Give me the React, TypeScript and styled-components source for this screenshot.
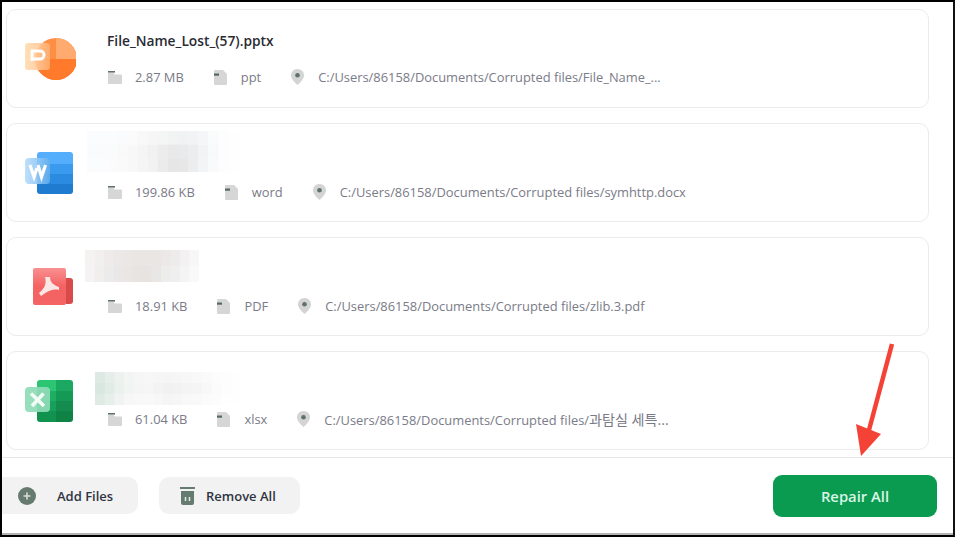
import React from "react";
import styled, { createGlobalStyle } from "styled-components";

const Global = createGlobalStyle`
  html, body { margin: 0; padding: 0; background: #000; }
  * { box-sizing: border-box; }
`;

const Frame = styled.div`
  position: relative;
  width: 955px;
  height: 537px;
  background: #fff;
  border-top: 2px solid #000;
  border-left: 2px solid #000;
  border-right: 2px solid #111;
  border-bottom: 2px solid #000;
  font-family: "Open Sans", "Noto Sans CJK KR", sans-serif;
  overflow: hidden;
  display: flex;
  flex-direction: column;
`;

const List = styled.div`
  display: flex;
  flex-direction: column;
  gap: 15px;
  padding: 7px 0 0 4px;
  width: 927px;
`;

const Card = styled.div`
  height: 99px;
  border: 1px solid #ebebeb;
  border-radius: 10px;
  background: #fff;
  display: flex;
  align-items: center;
`;

const IconCell = styled.div`
  width: 100px;
  flex: none;
  padding-left: 17px;
  display: flex;
  align-items: center;
`;

const Body = styled.div`
  flex: 1;
  height: 100%;
  min-width: 0;
  display: flex;
  flex-direction: column;
`;

const TitleSlot = styled.div<{ $height: number }>`
  height: ${(p) => p.$height}px;
  flex: none;
  display: flex;
  align-items: flex-start;
`;

const Title = styled.div`
  margin-top: 22px;
  font-size: 13.75px;
  line-height: 18px;
  font-weight: 600;
  color: #2b2b33;
`;

const Mosaic = styled.svg<{ $shift: number; $top: number }>`
  display: block;
  margin-left: ${(p) => p.$shift}px;
  margin-top: ${(p) => p.$top}px;
`;

const Meta = styled.div`
  display: flex;
  align-items: center;
  gap: 30px;
  height: 18px;
  padding-left: 1px;
  font-size: 12.9px;
  color: #7a7b88;
`;

const MetaItem = styled.div<{ $gap: number }>`
  display: flex;
  align-items: center;
  gap: ${(p) => p.$gap}px;
  white-space: nowrap;
`;

const KoreanTail = styled.span`
  font-size: 14.1px;
`;

const Footer = styled.div`
  margin-top: 7px;
  margin-left: -2px;
  height: 76px;
  border-top: 1px solid #e6e6e6;
  padding: 17px 16px 0 0;
  display: flex;
  align-items: flex-start;
  gap: 21px;
`;

const SoftButton = styled.div<{ $width: number; $gap: number; $pad: number; $flat?: boolean }>`
  width: ${(p) => p.$width}px;
  height: 37px;
  margin-top: 2px;
  background: #f2f2f2;
  border-radius: ${(p) => (p.$flat ? "0 10px 10px 0" : "10px")};
  padding-left: ${(p) => p.$pad}px;
  display: flex;
  align-items: center;
  gap: ${(p) => p.$gap}px;
  font-size: 13px;
  font-weight: 600;
  color: #2f3442;
`;

const RepairButton = styled.div`
  margin-left: auto;
  width: 164px;
  height: 42px;
  border-radius: 9px;
  background: #0a9b50;
  color: #d9f5e6;
  font-size: 14.8px;
  font-weight: 600;
  display: flex;
  align-items: center;
  justify-content: center;
`;

const BottomEdge = styled.div`
  position: absolute;
  left: 0;
  right: 0;
  bottom: 0;
  height: 2px;
  background: #b4b4b4;
`;

const Arrow = styled.svg`
  position: absolute;
  left: 848px;
  top: 340px;
`;

const Folder = () => (
  <svg width="14" height="13" viewBox="0 0 14 13">
    <path d="M0 2h5.5l1.5 1.5H13a1 1 0 0 1 1 1V12a1 1 0 0 1-1 1H1a1 1 0 0 1-1-1z" fill="#d6d6d6" />
    <rect x="0" y="0" width="7" height="1.6" fill="#5f7268" />
  </svg>
);

const FileGlyph = () => (
  <svg width="13" height="15" viewBox="0 0 13 15">
    <path d="M1 0h8l4 4v10a1 1 0 0 1-1 1H1a1 1 0 0 1-1-1V1a1 1 0 0 1 1-1z" fill="#d6d6d6" />
    <rect x="0" y="3.5" width="5" height="2.2" fill="#56695f" />
  </svg>
);

const Pin = () => (
  <svg width="13" height="16" viewBox="0 0 13 16">
    <path d="M6.5 0C2.9 0 0 2.8 0 6.3 0 10 3.6 13.6 6.5 16 9.4 13.6 13 10 13 6.3 13 2.8 10.1 0 6.5 0z" fill="#d4d4d4" />
    <circle cx="6.5" cy="6.3" r="2.3" fill="#5f7268" />
  </svg>
);

const PlusCircle = () => (
  <svg width="18" height="18" viewBox="0 0 18 18">
    <circle cx="9" cy="9" r="9" fill="#667b6f" />
    <path d="M9 5.5v7M5.5 9h7" stroke="#d9dedb" strokeWidth="1.6" />
  </svg>
);

const Trash = () => (
  <svg width="15" height="18" viewBox="0 0 15 18">
    <rect x="0" y="0" width="15" height="2" fill="#667b6f" />
    <path d="M1 4h13v12a2 2 0 0 1-2 2H3a2 2 0 0 1-2-2z" fill="#667b6f" />
    <path d="M5.5 10v4M9.5 10v4" stroke="#e4e8e5" strokeWidth="1.5" />
  </svg>
);

const PptIcon = () => (
  <svg width="52" height="46" viewBox="0 0 52 46">
    <defs>
      <linearGradient id="pg" x1="0" y1="0" x2="1" y2="0">
        <stop offset="0" stopColor="#ffe0b8" />
        <stop offset="1" stopColor="#ffb57a" stopOpacity="0.75" />
      </linearGradient>
    </defs>
    <circle cx="32" cy="23" r="21" fill="#ff8e45" />
    <path d="M32 2a21 21 0 0 1 21 21H32z" fill="#ffab6f" />
    <path d="M11 23h42a21 21 0 0 1-42 0z" fill="#ff7a2b" />
    <rect x="1" y="7" width="25" height="27" rx="3" fill="url(#pg)" />
    <path d="M8 25V15H16a4 4 0 0 1 0 8H8" fill="none" stroke="#fff" strokeWidth="3" />
  </svg>
);

const WordIcon = () => (
  <svg width="52" height="46" viewBox="0 0 52 46">
    <defs>
      <linearGradient id="wg" x1="0" y1="0" x2="1" y2="0">
        <stop offset="0" stopColor="#bfe0fa" />
        <stop offset="1" stopColor="#66b0ee" stopOpacity="0.8" />
      </linearGradient>
    </defs>
    <path d="M16 2h30a3 3 0 0 1 3 3v9H13V5a3 3 0 0 1 3-3z" fill="#55aefc" />
    <rect x="13" y="14" width="36" height="10" fill="#3a9bee" />
    <rect x="13" y="24" width="36" height="10" fill="#2b8be0" />
    <path d="M13 34h36v7a3 3 0 0 1-3 3H16a3 3 0 0 1-3-3z" fill="#1e7bcf" />
    <rect x="1" y="8" width="25" height="26" rx="4" fill="url(#wg)" />
    <path d="M6 15l4 12 3-9M14 15l3.5 12 4-12" fill="none" stroke="#fff" strokeWidth="3.2" />
  </svg>
);

const PdfIcon = () => (
  <svg width="52" height="46" viewBox="0 0 52 46">
    <defs>
      <linearGradient id="rg" x1="0" y1="0" x2="0" y2="1">
        <stop offset="0" stopColor="#f99090" />
        <stop offset="0.5" stopColor="#f46262" />
        <stop offset="1" stopColor="#f46464" />
      </linearGradient>
    </defs>
    <path d="M42 14h4a3 3 0 0 1 3 3v20a3 3 0 0 1-3 3h-4z" fill="#d94a4a" />
    <rect x="9" y="4" width="33" height="37" rx="2" fill="url(#rg)" />
    <path d="M21 13L26 13C26 18 29 21 35 23L35 26C30 25 27 26 23 28L17 32 15 29C20 25 23 20 21 13z" fill="#fbe6e6" />
  </svg>
);

const ExcelIcon = () => (
  <svg width="52" height="46" viewBox="0 0 52 46">
    <path d="M16 2h16v11H13V5a3 3 0 0 1 3-3z" fill="#2cc574" />
    <path d="M32 2h14a3 3 0 0 1 3 3v8H32z" fill="#1ba860" />
    <rect x="13" y="13" width="19" height="10" fill="#1eae63" />
    <rect x="32" y="13" width="17" height="10" fill="#159a55" />
    <rect x="13" y="23" width="19" height="10" fill="#16a059" />
    <rect x="32" y="23" width="17" height="10" fill="#138c4e" />
    <path d="M13 33h19v11H16a3 3 0 0 1-3-3z" fill="#11934f" />
    <path d="M32 33h17v8a3 3 0 0 1-3 3H32z" fill="#0e8345" />
    <rect x="1" y="9" width="25" height="25" rx="4" fill="#8fdcb7" fillOpacity="0.93" />
    <path d="M7 15.5L20 28M19.5 15.5L8 28" stroke="#f3fbf7" strokeWidth="3.6" />
  </svg>
);

type Cells = { w: number; h: number; rows: string[][] };

const MosaicBlock = ({ cells, shift, top }: { cells: Cells; shift: number; top: number }) => (
  <Mosaic
    $shift={shift}
    $top={top}
    width={cells.rows[0].length * cells.w}
    height={cells.rows.length * cells.h}
  >
    {cells.rows.map((r, y) =>
      r.map((c, x) => <rect key={`${x}-${y}`} x={x * cells.w} y={y * cells.h} width={cells.w + 0.5} height={cells.h + 0.5} fill={c} />)
    )}
  </Mosaic>
);

const blue: Cells = {
  w: 10.1,
  h: 13.7,
  rows: [
    ["#fbfcfe", "#fbfcfe", "#fbfcfd", "#fafbfc", "#fbfbfc", "#f8f8f8", "#f6f6f6", "#f4f5f5", "#f2f3f3", "#f1f2f3", "#f2f3f5", "#f5f6f8", "#fafbfc", "#fdfdfe", "#fefefe"],
    ["#fafbfd", "#fafbfd", "#fafbfc", "#f9f9fa", "#f8f8f8", "#f5f5f5", "#f1f1f1", "#ececec", "#e9e9ea", "#e8eaeb", "#ebedef", "#f1f3f5", "#f8f9fb", "#fdfdfe", "#fefefe"],
    ["#fbfcfd", "#fbfcfd", "#fbfbfc", "#fafafa", "#f8f8f8", "#f5f5f5", "#f2f2f2", "#ebebeb", "#e6e6e6", "#e7e7e8", "#ebedef", "#f2f4f6", "#f9fafb", "#fdfdfe", "#fefefe"],
  ],
};

const rose: Cells = {
  w: 9.5,
  h: 16,
  rows: [
    ["#f5f2f2", "#f2efef", "#eeebea", "#ebe8e7", "#ebe7e5", "#e9e6e3", "#e9e6e3", "#e9e6e4", "#ebe8e7", "#eeebeb", "#f3f1f1", "#f8f7f7"],
    ["#f5f3f3", "#f1eeee", "#ecebeb", "#e9e7e7", "#ebe6e4", "#e8e4e2", "#e6e3e0", "#e9e7e5", "#ededec", "#f0efef", "#f5f4f4", "#f9f9f9"],
  ],
};

const green: Cells = {
  w: 9.7,
  h: 11,
  rows: [
    ["#dde9e3", "#e5eeea", "#edf2ef", "#f3f5f4", "#f5f6f5", "#f7f7f7", "#f6f6f6", "#f5f5f5", "#f6f6f6", "#f7f7f7", "#f8f8f8", "#fafafa", "#fcfcfc", "#fdfdfd", "#fefefe"],
    ["#d8e7df", "#e1ece6", "#ebf1ed", "#f1f4f2", "#f4f5f4", "#f6f6f6", "#f3f3f3", "#f1f1f1", "#f2f2f2", "#f4f4f4", "#f5f5f5", "#f8f8f8", "#fbfbfb", "#fdfdfd", "#fefefe"],
    ["#dfeae5", "#e7efeb", "#f0f3f1", "#f6f7f6", "#f8f8f8", "#f9f9f9", "#f7f7f7", "#f5f5f5", "#f6f6f6", "#f8f8f8", "#f9f9f9", "#fbfbfb", "#fcfcfc", "#fefefe", "#fefefe"],
  ],
};

const Row = ({ size, kind, path }: { size: string; kind: string; path: React.ReactNode }) => (
  <Meta>
    <MetaItem $gap={13}>
      <Folder />
      <span>{size}</span>
    </MetaItem>
    <MetaItem $gap={14}>
      <FileGlyph />
      <span>{kind}</span>
    </MetaItem>
    <MetaItem $gap={14}>
      <Pin />
      <span>{path}</span>
    </MetaItem>
  </Meta>
);

export default function App() {
  return (
    <Frame>
      <Global />
      <List>
        <Card>
          <IconCell>
            <PptIcon />
          </IconCell>
          <Body>
            <TitleSlot $height={58}>
              <Title>File_Name_Lost_(57).pptx</Title>
            </TitleSlot>
            <Row size="2.87 MB" kind="ppt" path="C:/Users/86158/Documents/Corrupted files/File_Name_..." />
          </Body>
        </Card>
        <Card>
          <IconCell>
            <WordIcon />
          </IconCell>
          <Body>
            <TitleSlot $height={59}>
              <MosaicBlock cells={blue} shift={-20} top={7} />
            </TitleSlot>
            <Row size="199.86 KB" kind="word" path="C:/Users/86158/Documents/Corrupted files/symhttp.docx" />
          </Body>
        </Card>
        <Card>
          <IconCell>
            <PdfIcon />
          </IconCell>
          <Body>
            <TitleSlot $height={59}>
              <MosaicBlock cells={rose} shift={-22} top={12} />
            </TitleSlot>
            <Row size="18.91 KB" kind="PDF" path="C:/Users/86158/Documents/Corrupted files/zlib.3.pdf" />
          </Body>
        </Card>
        <Card>
          <IconCell>
            <ExcelIcon />
          </IconCell>
          <Body>
            <TitleSlot $height={58}>
              <MosaicBlock cells={green} shift={-12} top={20} />
            </TitleSlot>
            <Row
              size="61.04 KB"
              kind="xlsx"
              path={
                <>
                  C:/Users/86158/Documents/Corrupted files/<KoreanTail>과탐실 세특...</KoreanTail>
                </>
              }
            />
          </Body>
        </Card>
      </List>
      <Footer>
        <SoftButton $width={138} $gap={21} $pad={18} $flat>
          <PlusCircle />
          Add Files
        </SoftButton>
        <SoftButton $width={141} $gap={11} $pad={21}>
          <Trash />
          Remove All
        </SoftButton>
        <RepairButton>Repair All</RepairButton>
      </Footer>
      <BottomEdge />
      <Arrow width="50" height="118" viewBox="0 0 50 118">
        <path d="M42 2L19 88" stroke="#f44336" strokeWidth="4.5" fill="none" />
        <path d="M6 82L31 92 11 114z" fill="#f44336" />
      </Arrow>
    </Frame>
  );
}
